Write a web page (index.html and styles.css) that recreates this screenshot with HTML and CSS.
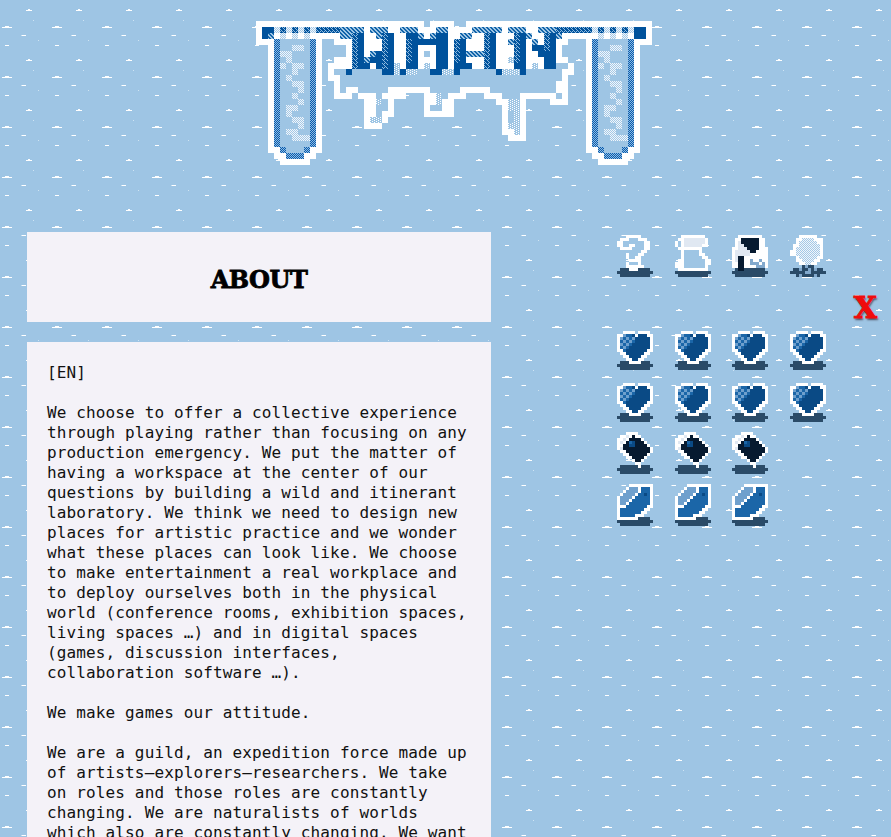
FILE: index.html
```html
<!DOCTYPE html>
<html lang="en">
<head>
<meta charset="utf-8">
<title>WMAN</title>
<link rel="stylesheet" href="styles.css">
</head>
<body>
<header class="banner"><svg class="logo" data-sprite="logo" role="img" aria-label="WMAN"></svg></header>
<div class="layout">
<main class="column">
<section class="panel title"><h1>ABOUT</h1></section>
<section class="panel text">
<p>[EN]</p>
<p>We choose to offer a collective experience<br>through playing rather than focusing on any<br>production emergency. We put the matter of<br>having a workspace at the center of our<br>questions by building a wild and itinerant<br>laboratory. We think we need to design new<br>places for artistic practice and we wonder<br>what these places can look like. We choose<br>to make entertainment a real workplace and<br>to deploy ourselves both in the physical<br>world (conference rooms, exhibition spaces,<br>living spaces …) and in digital spaces<br>(games, discussion interfaces,<br>collaboration software …).</p>
<p>We make games our attitude.</p>
<p>We are a guild, an expedition force made up<br>of artists–explorers–researchers. We take<br>on roles and those roles are constantly<br>changing. We are naturalists of worlds<br>which also are constantly changing. We want</p>
</section>
</main>
<nav class="side">
<div class="icons first"><svg data-sprite="question"></svg><svg data-sprite="scroll"></svg><svg data-sprite="cow"></svg><svg data-sprite="ball"></svg></div>
<a class="close">X</a>
<div class="icons">
<svg data-sprite="heart"></svg><svg data-sprite="heart"></svg><svg data-sprite="heart"></svg><svg data-sprite="heart"></svg>
<svg data-sprite="heart"></svg><svg data-sprite="heart"></svg><svg data-sprite="heart"></svg><svg data-sprite="heart"></svg>
<svg data-sprite="book"></svg><svg data-sprite="book"></svg><svg data-sprite="book"></svg><i></i>
<svg data-sprite="gem"></svg><svg data-sprite="gem"></svg><svg data-sprite="gem"></svg>
</div>
</nav>
</div>
<svg class="defs"><defs>
<pattern id="hatch" width="2" height="2" patternUnits="userSpaceOnUse"><rect width="2" height="2" fill="#8fbbe2"/><path d="M0 0h1v1h-1zM1 1h1v1h-1z" fill="#0a5cad"/></pattern>
<pattern id="stripe" width="4" height="4" patternUnits="userSpaceOnUse"><rect width="4" height="4" fill="#9ec5e4"/><path d="M0 0h2v1h-2zM1 1h2v1h-2zM2 2h2v1h-2zM3 3h1v1h-1zM0 3h1v1h-1z" fill="#1163a9"/></pattern>
<pattern id="dense" width="4" height="4" patternUnits="userSpaceOnUse"><rect width="4" height="4" fill="#00529c"/><path d="M0 0h1v1h-1zM1 1h1v1h-1zM2 2h1v1h-1zM3 3h1v1h-1zM0 2h1v1h-1z" fill="#8db9de"/></pattern>
<pattern id="mist" width="2" height="2" patternUnits="userSpaceOnUse"><rect width="2" height="2" fill="#a4c8e6"/><path d="M0 0h1v1h-1zM1 1h1v1h-1z" fill="#f1f6fb"/></pattern>
<pattern id="faint" width="4" height="2" patternUnits="userSpaceOnUse"><rect width="4" height="2" fill="#9ec5e4"/><path d="M0 0h1v1h-1zM2 1h1v1h-1z" fill="#fff"/></pattern>
</defs></svg>
<script src="sprites.js"></script>
</body>
</html>
```
FILE: styles.css
```css
* { box-sizing: border-box; }
html, body { height: 100%; }
body {
  margin: 0;
  overflow: hidden;
  background: #9ec5e4 url("data:image/svg+xml,%3Csvg xmlns='http://www.w3.org/2000/svg' width='50' height='50' shape-rendering='crispEdges'%3E%3Cpath fill='%23fff' d='M2 27h10v1H2zM5 26h4v1H5zM26 10h6v1h-6zM28 9h2v1h-2zM22 35h4v1h-4zM5 45h4v1H5z'/%3E%3Cpath fill='%23cfe4f3' d='M33 20h1v1h-1zM38 40h1v1h-1zM21 35h1v1h-1z'/%3E%3C/svg%3E") 0 0 / 50px 50px;
  font-family: "DejaVu Sans Mono", monospace;
  color: #111;
}
.banner { height: 232px; padding: 21px 0 0 256px; }
svg { display: block; }
.layout { display: flex; height: 605px; padding-left: 27px; }
.column { width: 464px; flex: none; display: flex; flex-direction: column; gap: 20px; }
.panel { background: #f4f2f8; }
.title { height: 90px; flex: none; display: flex; align-items: center; justify-content: center; }
h1 { margin: 6px 0 0; font: bold 24px/30px "DejaVu Serif", serif; letter-spacing: -0.5px; color: #000; -webkit-text-stroke: 0.8px #000; }
.text { flex: 1; min-height: 0; overflow: hidden; padding: 21px 20px 0; font-size: 16px; line-height: 20px; letter-spacing: 0.13px; white-space: nowrap; }
.text p { margin: 0 0 20px; }
.side { width: 400px; display: flex; flex-direction: column; padding: 3px 0 0 126px; }
.icons { display: grid; grid-template-columns: repeat(4, 57.6px); grid-auto-rows: 52px; }
.first { height: 52px; }
.close { align-self: flex-end; margin: 3px 14px 0 0; height: 38px; font: bold 30px/35px "DejaVu Serif", serif; color: #f00b0b; -webkit-text-stroke: 1px #f00b0b; text-shadow: 1px 2px 2px #4b4b5b; }
.defs { width: 0; height: 0; }
```
FILE: sprites.js
```js
const colors = { W:'#fff', D:'#00529c', p:'url(#hatch)', h:'url(#stripe)', d:'url(#dense)', q:'url(#mist)', m:'url(#faint)', L:'#9ec5e4',
  S:'#2a4b68', N:'#061a30', B:'#0a4a85', M:'#1b66a8', C:'#6fa0cd', E:'#e0e8f2', G:'#82a9cd' };

// Each logo row is a list of runs: colour + first column + optional last column.
const logoRows = [
'W0-27 W29-32 W35-65',
'W0 D1-2 q3 d4 q5 d6 q7 d8 q9 d10-13 h14-17 W18 h19-21 W22-23 h24-26 W27-29 h30-31 W32-35 h36-40 W41 h42-44 W45-46 h47-49 d50-55 q56 d57 q58 d59 q60 d61 q62 D63-64 W65',
'W0 D1 h2 W3 q4 W5 q6 W7 q8 W9-13 h14-15 d16 D17 W18-19 h20 d21 D22 W23-24 D25-26 h27 W28 h29 D30-31 W32-33 h34-35 W36-37 d38 D39 W40-42 d43 D44 h45 W46-47 d48 D49 h50 W51-55 W56 q57 W58 q59 W60 q61 W62 D63-64 W65',
'W0-2 W10 W13-15 d16 D17 W18-20 d21 D22 W23-24 d25 D26-31 W32 d33 D34 W35-37 d38 D39 W40-41 h42 d43 D44 W45 h46 W47 d48 D49 W50-51 W55 W63-65',
'W15 d16 D17 W18-20 d21 D22 W23-24 d25 D26 W27-29 D30-31 W32 d33 D34 W35-37 d38 D39 W40-42 d43 D44 W45 D46-47 d48 D49 W50',
'W15 d16 D17 W18 h19 D20 d21 D22 W23-24 d25 D26 W27 L28 W29 D30-31 W32 d33 D34 h35-37 d38 D39 W40-42 d43 D44 W45-46 D47-49 W50',
'W13-15 d16 D17 h18 D19-20 d21 D22 W23-24 d25 D26 W27-29 D30-31 W32 d33 D34 W35-37 d38 D39 W40-41 m42 d43 D44 W45-47 D48-49 W50-51',
'W12-14 W15 d16 D17-18 W19 D20 d21 D22 m23 W24 D25-26 W27 m28 W29 D30-31 W32 D33-35 W36-37 d38 D39 W40-42 D43-44 W45 m46 W47 D48-49 L50-51 W52',
'W12 L13-14 D15 L16-20 D21-22 m23 D24 m25-26 L27-28 D29-30 m31-32 D33 L34-39 D40 m41-43 D44 L45-50 W51-52',
'W12-13 L14-50 W51',
'W13 L14-49 W50-51',
'W13 L14 W15-16 L17-21 W22-28 L29-33 W34-38 L39-49 W50-51',
'W13-15 L16 W17-19 L20 W21-24 W28-29 m30 L31 W32-34 W38-40 L41-43 W44-49 L50 W51',
'W18-19 m20 L21 W22 W28-29 m30 W31-32 W40-41 m42-43 W44 W49-51',
'W18-19 L20-21 W22 W28 L29-30 W31-32 W41 m42-43 W44',
'W18-19 L20 W21-22 W28-32 W41 L42 m43 W44',
'W18 m19-20 W21 W41 L42 m43 W44',
'W18-20 W41 m42-43 W44',
'W41-42 m43 W44','W42-44','','','',''];
const mist = [[4,6,7],[5,4,5],[6,5],[7,4],[7,6,7],[8,6],[9,5],[10,6,7],[11,7],[12,6],[13,7],[14,5,6],[15,5],[16,6,7],[17,7],[18,5,6],[19,6,8]];

const sprites = {
question: [
'...WWWWW....','.WWW...WWW..','WW.......WW.','WW..WW...WW.','.WWWW....WW.','........WW..','...W...WW...','...W..WW....','....WWWW....','...W...W....','...WWWWWW...','.SSSWWWSSSS.','SSSSSSSSSSSS','.SSSSSSSSSS.'],
scroll: [
'..WWWWWWWW..','.WWEEEEEEEW.','W.WEEEEEEEW.','W.WEEEEEEWW.','.WWWWWWWW...','..W.....W...','..W.....WW..','..W......WW.','.WW.......WW','WWW.......WW','WWW.......W.','.WWWWWWWWWW.','SSSSSSSSSSSS','.SSSSSSSSSS.'],
cow: [
'..WWWWWWWW..','.WWNNNNNNWW.','.WENNNNNNWW.','.WEENNNNNWW.','WWEEENNNNWWW','WEEEEENNWWWW','WEEEEEWWWWWW','WENNWWWWWWWW','WENNWWGWWGWW','WWNNWWGGGWGW','WWNNWWWWGGGW','.SNNSSSSSSS.','SSSSSSSSSSSS','.SSSSSSSSSS.'],
ball: [
'...WWWWWW...','..WWqqqqWWW.','..WqqqqqqWW.','.WWqqqqqqqW.','.WqqqqqqqqW.','WWqqqqqqqqW.','WWqqqqqqqqW.','..WqqqqqqWW.','..WWqqqqWW..','...WWqqWW...','....SGSS....','.SSGSSGSGSS.','SSSSSGGSSSSS','..SGSSSSGS..'],
heart: [
'............','..WWWW.WWWW.','WWCMMBWBBBWW','WCMCMCBBBBBW','WMCMCMBBBBBW','WCMCMBBBBBBW','WMCMBBBBBBBW','WWMBBBBBBBWW','.WWBBBBBBWW.','..WWBBBBWW..','...WWBBWW...','.SSSWWWWSSS.','SSSSSSSSSSSS','.SSSSSSSSSS.'],
book: [
'...WWWW.....','.WWEWNWW....','WWEWNNNNW...','WEWNMBNNNW..','WWNNBBNNNNW.','WENNNNNNNNNW','.WWNNNNNNNNW','..WWNNNNNNW.','...WWNNNNW..','.....WNNW...','......WW....','.SSSSSSWSSS.','SSSSSSSSSSSS','.SSSSSSSSSS.'],
gem: [
'....WWWWWWWW','...WCCCWMMMW','..WCCCCWMMMW','.WCCCCWMMBMW','WCCCCWMMMMMW','WCCCWMMMMMMW','WCCWMMMMMMMW','WWWMMMMMMMWW','WMMMMMMMMWW.','WMMMMMMMWW..','WMMMMMWWW...','WWWWWWWSSSS.','SSSSSSSSSSSS','.SSSSSSSSSS.']
};

function rect(svg, x, y, w, h, fill) {
  const r = document.createElementNS('http://www.w3.org/2000/svg', 'rect');
  for (const [k, v] of Object.entries({x, y, width:w, height:h, fill})) r.setAttribute(k, v);
  svg.append(r);
}

for (const svg of document.querySelectorAll('svg[data-sprite]')) {
  const name = svg.dataset.sprite;
  svg.setAttribute('shape-rendering', 'crispEdges');
  if (name === 'logo') {
    svg.setAttribute('width', 396); svg.setAttribute('height', 144);
    const run = (c, y, a, b = a) => rect(svg, a * 6, y * 6, (b - a + 1) * 6, 6, colors[c]);
    for (const o of [0, 53]) {
      rect(svg, (o + 3) * 6, 18, 42, 108, colors.L);
      for (const [x, c] of [[2,'W'],[3,'p'],[9,'p'],[10,'W']]) rect(svg, (o + x) * 6, 18, 6, 108, colors[c]);
      for (const [y, a, b] of mist) run('q', y, a + o, (b || a) + o);
      run('W', 21, o + 2, o + 3); run('p', 21, o + 4); run('L', 21, o + 5, o + 7); run('p', 21, o + 8); run('W', 21, o + 9, o + 10);
      run('W', 22, o + 3, o + 4); run('p', 22, o + 5, o + 7); run('W', 22, o + 8, o + 9);
      run('W', 23, o + 4, o + 8);
    }
    logoRows.forEach((line, y) => line.split(' ').filter(Boolean).forEach(s => {
      const [a, b] = s.slice(1).split('-').map(Number);
      run(s[0], y, a, b === undefined ? a : b);
    }));
  } else {
    svg.setAttribute('width', 36); svg.setAttribute('height', 42);
    sprites[name].forEach((row, y) => [...row].forEach((c, x) => {
      if (colors[c]) rect(svg, x * 3, y * 3, 3, 3, colors[c]);
    }));
  }
}
```
